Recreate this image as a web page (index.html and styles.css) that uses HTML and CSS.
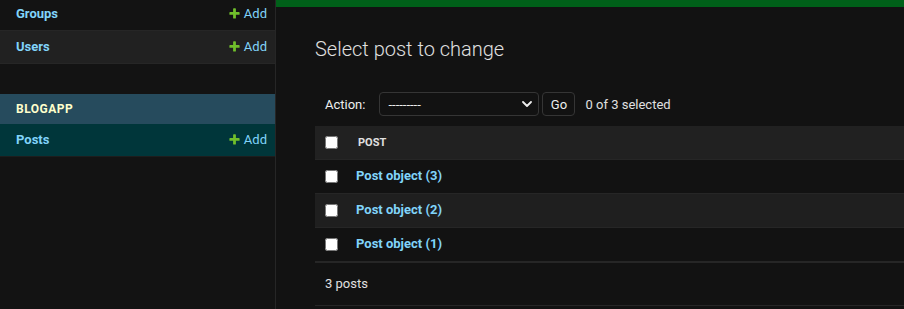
FILE: index.html
```html
<!DOCTYPE html>
<html lang="en">
<head>
    <meta charset="UTF-8">
    <title>Select post to change</title>
    <link rel="stylesheet" href="styles.css">
</head>
<body>
    <div class="page">
        <nav class="sidebar">
            <table class="module module-first">
                <tr>
                    <th><a href="#">Groups</a></th>
                    <td><a href="#" class="addlink"><svg viewBox="0 0 1792 1792" width="13" height="13"><path fill="#70bf2b" d="M1600 796v192q0 40-28 68t-68 28h-416v416q0 40-28 68t-68 28h-192q-40 0-68-28t-28-68v-416h-416q-40 0-68-28t-28-68v-192q0-40 28-68t68-28h416v-416q0-40 28-68t68-28h192q40 0 68 28t28 68v416h416q40 0 68 28t28 68z"/></svg>Add</a></td>
                </tr>
                <tr class="alt">
                    <th><a href="#">Users</a></th>
                    <td><a href="#" class="addlink"><svg viewBox="0 0 1792 1792" width="13" height="13"><path fill="#70bf2b" d="M1600 796v192q0 40-28 68t-68 28h-416v416q0 40-28 68t-68 28h-192q-40 0-68-28t-28-68v-416h-416q-40 0-68-28t-28-68v-192q0-40 28-68t68-28h416v-416q0-40 28-68t68-28h192q40 0 68 28t28 68v416h416q40 0 68 28t28 68z"/></svg>Add</a></td>
                </tr>
            </table>
            <table class="module">
                <caption>Blogapp</caption>
                <tr class="current">
                    <th><a href="#">Posts</a></th>
                    <td><a href="#" class="addlink"><svg viewBox="0 0 1792 1792" width="13" height="13"><path fill="#70bf2b" d="M1600 796v192q0 40-28 68t-68 28h-416v416q0 40-28 68t-68 28h-192q-40 0-68-28t-28-68v-416h-416q-40 0-68-28t-28-68v-192q0-40 28-68t68-28h416v-416q0-40 28-68t68-28h192q40 0 68 28t28 68v416h416q40 0 68 28t28 68z"/></svg>Add</a></td>
                </tr>
            </table>
        </nav>

        <main class="main">
            <div class="messagebar"></div>
            <div class="content">
                <h1>Select post to change</h1>

                <div class="actions">
                    <label>Action:</label>
                    <span class="select-wrap">
                        <select>
                            <option>---------</option>
                            <option>Delete selected posts</option>
                        </select>
                        <svg class="chevron" viewBox="0 0 10 6" width="10" height="6"><path d="M1 1l4 4 4-4" fill="none" stroke="#eeeeee" stroke-width="1.8" stroke-linecap="round" stroke-linejoin="round"/></svg>
                    </span>
                    <button class="button">Go</button>
                    <span class="action-counter">0 of 3 selected</span>
                </div>

                <table class="result-list">
                    <thead>
                        <tr>
                            <th class="check-col"><input type="checkbox"></th>
                            <th>Post</th>
                        </tr>
                    </thead>
                    <tbody>
                        <tr>
                            <td class="check-col"><input type="checkbox"></td>
                            <td><a href="#">Post object (3)</a></td>
                        </tr>
                        <tr class="alt">
                            <td class="check-col"><input type="checkbox"></td>
                            <td><a href="#">Post object (2)</a></td>
                        </tr>
                        <tr>
                            <td class="check-col"><input type="checkbox"></td>
                            <td><a href="#">Post object (1)</a></td>
                        </tr>
                    </tbody>
                </table>
                <p class="paginator">3 posts</p>
            </div>
        </main>
    </div>
</body>
</html>
```

FILE: styles.css
```css
body {
    margin: 0;
    background-color: #121212;
    color: #eeeeee;
    font-family: Roboto, "Liberation Sans", sans-serif;
    font-size: 13px;
    overflow: hidden;
}
a {
    color: #81d4fa;
    text-decoration: none;
}
.page {
    display: flex;
    min-height: 100vh;
}

/* sidebar */
.sidebar {
    width: 275px;
    flex-shrink: 0;
    border-right: 1px solid #262626;
    background-color: #131313;
}
.module {
    width: 100%;
    border-collapse: collapse;
    margin-bottom: 30px;
}
.module-first {
    margin-top: -2px;
}
.module caption {
    background-color: #264b5d;
    color: #ffffcc;
    text-align: left;
    text-transform: uppercase;
    font-weight: bold;
    font-size: 12px;
    letter-spacing: 0.5px;
    line-height: 14px;
    padding: 8px 16px;
}
.module th,
.module td {
    height: 16px;
    padding: 8px 8px 8px 16px;
    line-height: 16px;
    border-bottom: 1px solid #262626;
}
.module th {
    text-align: left;
    font-weight: bold;
}
.module td {
    text-align: right;
    white-space: nowrap;
    padding-right: 8px;
}
.module tr.alt {
    background-color: #212121;
}
.module tr.current {
    background-color: #00363a;
}
.module tr.current th,
.module tr.current td {
    border-bottom-color: #1d1d1d;
}
.addlink svg {
    vertical-align: -2px;
    margin-right: 3px;
}

/* main */
.main {
    flex: 1;
    min-width: 0;
}
.messagebar {
    height: 7px;
    background-color: #006019;
}
.content {
    padding-left: 39px;
}
.content h1 {
    margin: 30px 0 21px;
    font-size: 20px;
    line-height: 24px;
    font-weight: 300;
    color: #e0e0e0;
}
.actions {
    display: flex;
    align-items: center;
    padding: 10px;
    height: 24px;
}
.actions label {
    margin-right: 14px;
}
.select-wrap {
    position: relative;
    display: inline-block;
}
.select-wrap select {
    appearance: none;
    -webkit-appearance: none;
    width: 160px;
    height: 24px;
    padding: 0 24px 0 8px;
    background-color: #121212;
    color: #eeeeee;
    border: 1px solid #353535;
    border-radius: 4px;
    font-family: inherit;
    font-size: 13px;
}
.chevron {
    position: absolute;
    right: 7px;
    top: 9px;
    pointer-events: none;
}
.button {
    margin-left: 3px;
    width: 33px;
    height: 24px;
    padding: 0;
    background-color: #121212;
    color: #eeeeee;
    border: 1px solid #353535;
    border-radius: 4px;
    font-family: inherit;
    font-size: 13px;
}
.action-counter {
    margin-left: 10px;
    color: #e0e0e0;
}

.result-list {
    width: 100%;
    border-collapse: collapse;
}
.result-list th,
.result-list td {
    line-height: 17px;
    border-bottom: 1px solid #262626;
    text-align: left;
    vertical-align: middle;
}
.result-list thead th {
    background-color: #212121;
    padding: 8px 10px;
    font-size: 11px;
    font-weight: bold;
    text-transform: uppercase;
    color: #e0e0e0;
}
.result-list td {
    padding: 7px 8px 9px;
    font-weight: bold;
}
.result-list .check-col {
    width: 13px;
    padding: 8px 10px;
}
.result-list input[type="checkbox"] {
    margin: 0;
    display: block;
}
.result-list tr.alt {
    background-color: #1f1f1f;
}
.paginator {
    margin: 0;
    padding: 10px;
    line-height: 22px;
    border-top: 1px solid #262626;
    border-bottom: 1px solid #262626;
    color: #e0e0e0;
}
```
